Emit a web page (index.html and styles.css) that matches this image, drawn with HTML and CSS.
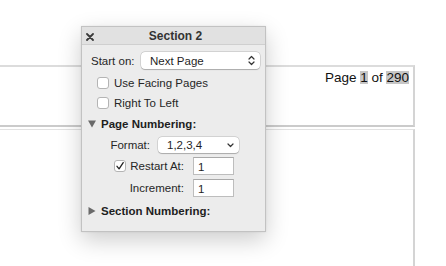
FILE: index.html
```html
<!DOCTYPE html>
<html>
<head>
<meta charset="utf-8">
<link rel="stylesheet" href="styles.css">
</head>
<body>
<div class="doc">
  <div class="page page-first">
    <div class="page-header">Page <span class="hl">1</span> of <span class="hl">290</span></div>
  </div>
  <div class="page page-second"></div>
</div>

<div class="panel">
  <div class="titlebar">
    <svg class="close" width="8" height="8" viewBox="0 0 8 8"><path d="M1 1L7 7M7 1L1 7" stroke="#3a3a3a" stroke-width="1.8" stroke-linecap="round"/></svg>
    <span class="title">Section 2</span>
  </div>
  <div class="body">
    <div class="row row-start">
      <span class="label">Start on:</span>
      <div class="select select-wide">
        <span>Next Page</span>
        <svg class="updown" width="7" height="11" viewBox="0 0 7 11"><path d="M1 4L3.5 1.5L6 4M1 7L3.5 9.5L6 7" fill="none" stroke="#333" stroke-width="1.2" stroke-linecap="round" stroke-linejoin="round"/></svg>
      </div>
    </div>
    <div class="row row-check">
      <span class="checkbox"></span>
      <span class="label">Use Facing Pages</span>
    </div>
    <div class="row row-check">
      <span class="checkbox"></span>
      <span class="label">Right To Left</span>
    </div>
    <div class="row row-heading">
      <svg class="tri" width="8" height="8" viewBox="0 0 8 8"><path d="M0 0.5H8L4 7.5Z" fill="#6a6a6a"/></svg>
      <span class="heading">Page Numbering:</span>
    </div>
    <div class="row row-format">
      <span class="label label-format">Format:</span>
      <div class="select select-narrow">
        <span>1,2,3,4</span>
        <svg class="down" width="7" height="5" viewBox="0 0 7 5"><path d="M1 1L3.5 3.5L6 1" fill="none" stroke="#333" stroke-width="1.2" stroke-linecap="round" stroke-linejoin="round"/></svg>
      </div>
    </div>
    <div class="row row-field">
      <div class="field-label">
        <span class="checkbox">
          <svg width="12" height="12" viewBox="0 0 12 12"><path d="M3 6.3L5.1 8.8L9.2 2.6" fill="none" stroke="#222" stroke-width="1.3" stroke-linecap="round" stroke-linejoin="round"/></svg>
        </span>
        <span class="label">Restart At:</span>
      </div>
      <div class="input">1</div>
    </div>
    <div class="row row-field row-inc">
      <div class="field-label">
        <span class="label">Increment:</span>
      </div>
      <div class="input">1</div>
    </div>
    <div class="row row-heading row-section">
      <svg class="tri" width="8" height="8" viewBox="0 0 8 8"><path d="M0.5 0V8L7.5 4Z" fill="#6a6a6a"/></svg>
      <span class="heading">Section Numbering:</span>
    </div>
  </div>
</div>
</body>
</html>
```

FILE: styles.css
```css
* { box-sizing: border-box; }

html, body {
  margin: 0;
  padding: 0;
  width: 446px;
  height: 266px;
  overflow: hidden;
  background: #ffffff;
}

body {
  position: relative;
  font-family: "Liberation Sans", Arial, sans-serif;
  color: #222;
}

.doc {
  padding-top: 65px;
}

.page {
  margin-left: -6px;
  width: 421px;
  background: #fff;
}

.page-first {
  height: 62px;
  border-top: 2px solid #dcdcdc;
  border-right: 2px solid #d4d4d4;
  border-bottom: 2px solid #cbcbcb;
}

.page-second {
  margin-top: 2px;
  height: 137px;
  border-top: 1px solid #e2e2e2;
  border-right: 2px solid #d4d4d4;
}

.page-header {
  display: flex;
  justify-content: flex-end;
  padding-top: 4px;
  padding-right: 4px;
  font-size: 13.5px;
  line-height: 13px;
  color: #111;
  white-space: pre;
}

.hl {
  background: #c6c6c6;
}

/* floating panel */
.panel {
  position: absolute;
  left: 81px;
  top: 26px;
  width: 185px;
  height: 206px;
  background: #ececec;
  border: 1px solid #c2c2c2;
  box-shadow: 0 8px 22px rgba(0, 0, 0, 0.2), 0 0 2px rgba(0,0,0,0.08);
  font-size: 11.5px;
  color: #262626;
}

.titlebar {
  position: relative;
  height: 18px;
  background: #e1e1e1;
  border-bottom: 1px solid #cfcfcf;
  display: flex;
  align-items: center;
  justify-content: center;
}

.close {
  position: absolute;
  left: 4px;
  top: 6px;
}

.title {
  font-weight: bold;
  font-size: 12px;
  color: #333;
  padding-left: 4px;
}

.body {
  display: flex;
  flex-direction: column;
}

.row {
  display: flex;
  align-items: center;
}

.label {
  line-height: 12px;
}

.row-start {
  margin-top: 7px;
  height: 17px;
  padding-left: 9px;
}

.row-start .label {
  width: 50px;
}

.select {
  display: flex;
  align-items: center;
  justify-content: space-between;
  background: #fff;
  border-radius: 4px;
  box-shadow: 0 0 0 0.5px rgba(0,0,0,0.18), 0 0.5px 1px rgba(0,0,0,0.2);
  color: #1f1f1f;
}

.select-wide {
  width: 119px;
  height: 17px;
  padding: 0 5px 0 9px;
}

.select-narrow {
  width: 81px;
  height: 16px;
  padding: 0 5px 0 9px;
}

.row-check {
  margin-top: 8px;
  height: 12px;
  padding-left: 15px;
  gap: 5px;
}

.checkbox {
  width: 12px;
  height: 12px;
  background: #fff;
  border: 1px solid #b4b4b4;
  border-radius: 3px;
  display: flex;
  flex: none;
}

.checkbox svg {
  margin: -1px;
}

.row-heading {
  margin-top: 8px;
  height: 14px;
  padding-left: 6px;
  gap: 5px;
}

.heading {
  font-weight: bold;
  font-size: 11.5px;
  color: #1e1e1e;
}

.row-format {
  margin-top: 6px;
  height: 16px;
  gap: 8px;
}

.label-format {
  width: 68px;
  text-align: right;
}

.row-field {
  margin-top: 4px;
  height: 18px;
  gap: 9px;
}

.field-label {
  width: 102px;
  display: flex;
  align-items: center;
  justify-content: flex-end;
  gap: 4px;
}

.input {
  width: 41px;
  height: 18px;
  background: #fff;
  border: 1px solid #bdbdbd;
  border-top-color: #a9a9a9;
  padding: 3px 0 0 4px;
  line-height: 12px;
  color: #1f1f1f;
}

.row-section {
  margin-top: 7px;
}
```
